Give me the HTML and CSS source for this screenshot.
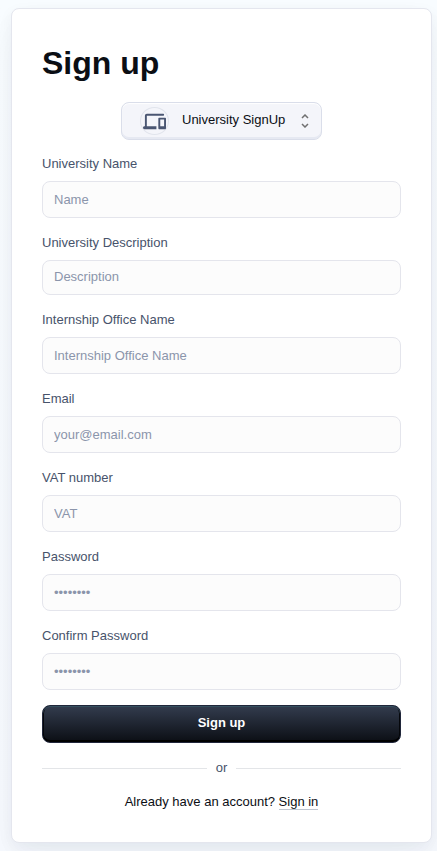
FILE: index.html
```html
<!DOCTYPE html>
<html lang="en">
<head>
<meta charset="utf-8">
<meta name="viewport" content="width=device-width, initial-scale=1">
<title>Sign up</title>
<link rel="stylesheet" href="styles.css">
</head>
<body>
<main class="card">
  <h1 class="title">Sign up</h1>
  <div class="picker">
    <span class="picker-icon">
      <svg viewBox="0 0 24 24" width="23" height="23" aria-hidden="true"><path fill="currentColor" d="M4 6h17c.55 0 1-.45 1-1s-.45-1-1-1H4c-1.100 0-2 .9-2 2v11h-.5C.67 17 0 17.670 0 18.500S.67 20 1.500 20H14v-3H4zm19 2h-6c-.55 0-1 .45-1 1v10c0 .55.45 1 1 1h6c.55 0 1-.45 1-1V9c0-.55-.45-1-1-1m-1 9h-4v-7h4z"/></svg>
    </span>
    <select class="picker-select" aria-label="Account type">
      <option>University SignUp</option>
      <option>Student SignUp</option>
      <option>Company SignUp</option>
    </select>
    <svg class="picker-arrows" viewBox="0 0 8 14" width="8" height="14" aria-hidden="true"><path fill="none" stroke="currentColor" stroke-width="1.500" d="M1 4l3-3 3 3M1 10l3 3 3-3"/></svg>
  </div>
  <form class="form">
    <div class="fields">
      <div class="field">
        <label for="name">University Name</label>
        <input id="name" type="text" placeholder="Name">
      </div>
      <div class="field">
        <label for="description">University Description</label>
        <textarea id="description" rows="1" placeholder="Description"></textarea>
      </div>
      <div class="field">
        <label for="office">Internship Office Name</label>
        <input id="office" type="text" placeholder="Internship Office Name">
      </div>
      <div class="field">
        <label for="email">Email</label>
        <input id="email" type="email" placeholder="your@email.com">
      </div>
      <div class="field">
        <label for="vat">VAT number</label>
        <input id="vat" type="text" placeholder="VAT">
      </div>
      <div class="field">
        <label for="password">Password</label>
        <input id="password" type="password" placeholder="••••••••">
      </div>
      <div class="field">
        <label for="confirm">Confirm Password</label>
        <input id="confirm" type="password" placeholder="••••••••">
      </div>
    </div>
    <button class="submit" type="submit">Sign up</button>
  </form>
  <div class="divider">or</div>
  <p class="signin">Already have an account? <a href="#">Sign in</a></p>
</main>
</body>
</html>
```
FILE: styles.css
```css
* {
  box-sizing: border-box;
}

body {
  margin: 0;
  padding: 8px 5px 8px 11px;
  background: linear-gradient(#f8fcff, #f6f9fe);
  color: #0b0e14;
  font: 13px/18px "Liberation Sans", Arial, sans-serif;
}

.card {
  max-width: 450px;
  margin: 0 auto;
  padding: 32px 30px 31px;
  border: 1px solid #e4e6ee;
  border-radius: 8px;
  background: #fff;
  box-shadow: 0 5px 15px rgba(20, 30, 50, 0.05), 0 15px 35px -5px rgba(20, 30, 50, 0.05);
}

.title {
  margin: 0;
  font-size: 32px;
  line-height: 44px;
  font-weight: 600;
}

.picker {
  position: relative;
  width: 201px;
  margin: 17px auto 15px;
}

.picker-select {
  display: block;
  width: 100%;
  height: 38px;
  padding: 0 30px 2px 60px;
  appearance: none;
  border: 1px solid #dadeea;
  border-radius: 8px;
  background: #f4f5fa;
  box-shadow: inset 0 1px 1px #fff, inset 0 -2px 0 #e6e9f2;
  color: #0b0e14;
  font: inherit;
}

.picker-icon {
  position: absolute;
  top: 5px;
  left: 19px;
  display: grid;
  place-items: center;
  width: 29px;
  height: 28px;
  border: 1px solid #e1e4ec;
  border-radius: 50%;
  color: #4a5672;
  pointer-events: none;
}

.picker-arrows {
  position: absolute;
  top: 12px;
  right: 13px;
  color: #707070;
  pointer-events: none;
}

.form {
  display: grid;
  gap: 15px;
}

.fields {
  display: grid;
  gap: 16px;
}

.field {
  display: grid;
  gap: 8px;
}

.field label {
  color: #47536b;
}

.field input,
.field textarea {
  display: block;
  width: 100%;
  height: 37px;
  margin: 0;
  padding: 8px 11px;
  border: 1px solid #e4e5ec;
  border-radius: 8px;
  background: #fcfcfc;
  color: #0b0e14;
  font: inherit;
  resize: none;
}

.field textarea {
  height: 35px;
  padding-top: 7px;
  overflow: hidden;
}

.field ::placeholder {
  color: #8b95ab;
  opacity: 1;
}

.submit {
  height: 38px;
  padding: 0 16px 3px;
  border: 1px solid #20263a;
  border-radius: 8px;
  background: linear-gradient(#333c4e, #0b0e14);
  box-shadow: inset 0 1px 0 #35505f, inset 0 -2px 0 #000, inset 1px 0 0 #05070b, inset -1px 0 0 #05070b;
  color: #fff;
  font: inherit;
  font-weight: 600;
}

.divider {
  display: flex;
  align-items: center;
  gap: 9px;
  margin: 16px 0;
  color: #47536b;
}

.divider::before,
.divider::after {
  content: "";
  flex: 1;
  height: 1px;
  background: #e3e5e8;
}

.signin {
  margin: 0;
  text-align: center;
}

.signin a {
  display: inline-block;
  line-height: 15px;
  border-bottom: 1px solid #bfc6d0;
  color: inherit;
  text-decoration: none;
}
```
